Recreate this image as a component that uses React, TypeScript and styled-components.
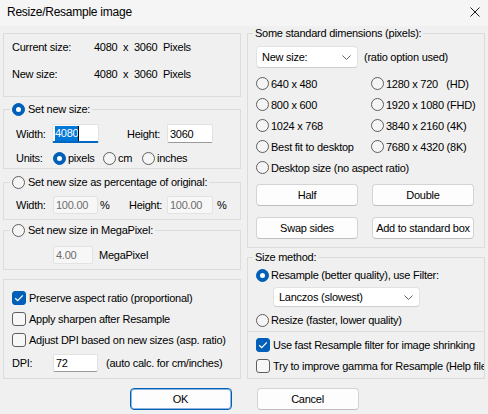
import styled, { createGlobalStyle } from 'styled-components';

const GlobalStyle = createGlobalStyle`
  * {
    box-sizing: border-box;
  }
  html,
  body {
    margin: 0;
    padding: 0;
    background: #f0f0f0;
  }
  body {
    font-family: 'Liberation Sans', Arial, sans-serif;
    font-size: 11px;
    letter-spacing: -0.25px;
    color: #000;
  }
`;

const Window = styled.div`
  width: 488px;
  height: 414px;
  display: flex;
  flex-direction: column;
  background: #f0f0f0;
  overflow: hidden;
`;

const TitleBar = styled.div`
  height: 26px;
  flex: none;
  display: flex;
  align-items: center;
  justify-content: space-between;
  padding: 0 8px 2px 7px;
  background: #f5f5f5;
  font-size: 12px;
`;

const Body = styled.div`
  display: flex;
  gap: 6px;
  padding: 0 3px;
`;

const Column = styled.div<{ $w: number; $pt?: number }>`
  width: ${(p) => p.$w}px;
  padding-top: ${(p) => p.$pt ?? 0}px;
  display: flex;
  flex-direction: column;
`;

const Panel = styled.div<{ $mt?: number; $pad: string }>`
  margin-top: ${(p) => p.$mt ?? 0}px;
  border: 1px solid #dcdcdc;
  padding: ${(p) => p.$pad};
  display: flex;
  flex-direction: column;
`;

const Group = styled.fieldset<{ $mt?: number; $pad: string }>`
  margin: ${(p) => p.$mt ?? 0}px 0 0;
  min-width: 0;
  border: 1px solid #dcdcdc;
  padding: ${(p) => p.$pad};
`;

const Legend = styled.legend<{ $h: number }>`
  height: ${(p) => p.$h}px;
  padding: 0 2px;
  line-height: ${(p) => p.$h}px;
`;

const LegendInner = styled.span`
  display: flex;
  align-items: center;
  gap: 3px;
  height: 100%;
`;

const Stack = styled.div<{ $pl?: number }>`
  display: flex;
  flex-direction: column;
  padding-left: ${(p) => p.$pl ?? 0}px;
`;

const Row = styled.div<{ $h: number; $mt?: number; $pl?: number }>`
  height: ${(p) => p.$h}px;
  margin-top: ${(p) => p.$mt ?? 0}px;
  padding-left: ${(p) => p.$pl ?? 0}px;
  display: flex;
  align-items: center;
  white-space: nowrap;
  overflow: hidden;
`;

const Caption = styled.span<{ $w?: number; $ml?: number }>`
  flex: none;
  width: ${(p) => (p.$w ? `${p.$w}px` : 'auto')};
  margin-left: ${(p) => p.$ml ?? 0}px;
  white-space: pre;
`;

const TextBox = styled.div<{ $w: number; $h: number; $ml?: number; $state?: 'focus' | 'disabled' }>`
  flex: none;
  width: ${(p) => p.$w}px;
  height: ${(p) => p.$h}px;
  margin-left: ${(p) => p.$ml ?? 0}px;
  padding: 0 2px;
  display: flex;
  align-items: center;
  background: ${(p) => (p.$state === 'disabled' ? '#f7f7f7' : '#fff')};
  color: ${(p) => (p.$state === 'disabled' ? '#6d6d6d' : '#000')};
  border: 1px solid #e2e2e2;
  border-bottom: ${(p) =>
    p.$state === 'focus'
      ? '2px solid #0067c0'
      : p.$state === 'disabled'
      ? '1px solid #e2e2e2'
      : '1px solid #9a9a9a'};
  border-radius: 2px;
`;

const Selection = styled.span`
  background: #0078d7;
  color: #fff;
  height: 15px;
  line-height: 15px;
`;

const Caret = styled.span`
  width: 1px;
  height: 15px;
  background: #000;
`;

const Dropdown = styled.div<{ $w: number; $h: number; $ml?: number }>`
  flex: none;
  width: ${(p) => p.$w}px;
  height: ${(p) => p.$h}px;
  margin-left: ${(p) => p.$ml ?? 0}px;
  padding: 0 6px 0 5px;
  display: flex;
  align-items: center;
  justify-content: space-between;
  background: #fff;
  border: 1px solid #e2e2e2;
  border-bottom-color: #cdcdcd;
  border-radius: 4px;
`;

const RadioMark = styled.span<{ $checked?: boolean }>`
  flex: none;
  width: 13px;
  height: 13px;
  border-radius: 50%;
  border: 1px solid ${(p) => (p.$checked ? '#005fb8' : '#5f5f5f')};
  background: ${(p) => (p.$checked ? '#005fb8' : '#f5f5f5')};
  display: flex;
  align-items: center;
  justify-content: center;
  &::after {
    content: '';
    display: ${(p) => (p.$checked ? 'block' : 'none')};
    width: 5px;
    height: 5px;
    border-radius: 50%;
    background: #fff;
  }
`;

const CheckBox = styled.span<{ $checked?: boolean }>`
  flex: none;
  width: 14px;
  height: 14px;
  border-radius: 3px;
  border: 1px solid ${(p) => (p.$checked ? '#005fb8' : '#5f5f5f')};
  background: ${(p) => (p.$checked ? '#005fb8' : '#f7f7f7')};
  display: flex;
  align-items: center;
  justify-content: center;
`;

const Choice = styled.label<{ $w?: number; $gap?: number }>`
  flex: none;
  width: ${(p) => (p.$w ? `${p.$w}px` : 'auto')};
  display: flex;
  align-items: center;
  gap: ${(p) => p.$gap ?? 2}px;
  white-space: pre;
`;

const RadioGrid = styled.div`
  margin-top: 5px;
  display: grid;
  grid-template-columns: 115px auto;
  grid-auto-rows: 21px;
  align-items: center;
`;

const ButtonGrid = styled.div`
  margin-top: 6px;
  display: grid;
  grid-template-columns: 102px 102px;
  column-gap: 14px;
  row-gap: 11px;
`;

const PushButton = styled.button<{ $primary?: boolean }>`
  height: 22px;
  width: 102px;
  padding: 0;
  font: inherit;
  letter-spacing: inherit;
  color: #000;
  background: #fdfdfd;
  border: 1px solid ${(p) => (p.$primary ? '#005fb8' : '#d4d4d4')};
  border-bottom-color: ${(p) => (p.$primary ? '#005fb8' : '#bfbfbf')};
  border-radius: 4px;
  box-shadow: ${(p) => (p.$primary ? 'inset 0 0 0 1px rgba(0, 95, 184, 0.45)' : 'none')};
`;

const Divider = styled.div`
  height: 1px;
  margin: 1px 0 0 -8px;
  background: #dcdcdc;
`;

const Footer = styled.div`
  margin-top: 9px;
  display: flex;
  justify-content: center;
  gap: 25px;
`;

const Chevron = () => (
  <svg width='9' height='5' viewBox='0 0 9 5'>
    <path d='M0.5 0.5 L4.5 4.5 L8.5 0.5' fill='none' stroke='#5f5f5f' strokeWidth='1' />
  </svg>
);

const Tick = () => (
  <svg width='10' height='8' viewBox='0 0 10 8'>
    <path d='M1.2 4.2 L3.7 6.6 L8.8 1.4' fill='none' stroke='#fff' strokeWidth='1.3' />
  </svg>
);

const Radio = ({ label, checked, w }: { label: string; checked?: boolean; w?: number }) => (
  <Choice $w={w}>
    <RadioMark $checked={checked} />
    {label}
  </Choice>
);

const Check = ({ label, checked }: { label: string; checked?: boolean }) => (
  <Choice $gap={3}>
    <CheckBox $checked={checked}>{checked && <Tick />}</CheckBox>
    {label}
  </Choice>
);

const standardSizes = [
  ['640 x 480', '1280 x 720   (HD)'],
  ['800 x 600', '1920 x 1080 (FHD)'],
  ['1024 x 768', '3840 x 2160 (4K)'],
  ['Best fit to desktop', '7680 x 4320 (8K)'],
];

export default function App() {
  return (
    <>
      <GlobalStyle />
      <Window>
        <TitleBar>
          <span>Resize/Resample image</span>
          <svg width='10' height='10' viewBox='0 0 10 10'>
            <path d='M0.5 0.5 L9.5 9.5 M9.5 0.5 L0.5 9.5' stroke='#1a1a1a' strokeWidth='1' />
          </svg>
        </TitleBar>
        <Body>
          <Column $w={239} $pt={7}>
            <Panel $pad='5px 0 14px 8px'>
              <Row $h={16}>
                <Caption $w={82}>Current size:</Caption>
                <Caption>4080  x  3060  Pixels</Caption>
              </Row>
              <Row $h={16} $mt={11}>
                <Caption $w={82}>New size:</Caption>
                <Caption>4080  x  3060  Pixels</Caption>
              </Row>
            </Panel>

            <Group $mt={4} $pad='6px 0 2px 6px'>
              <Legend $h={16}>
                <LegendInner>
                  <RadioMark $checked />
                  Set new size:
                </LegendInner>
              </Legend>
              <Stack $pl={6}>
                <Row $h={21}>
                  <Caption $w={36}>Width:</Caption>
                  <TextBox $w={47} $h={19} $state='focus'>
                    <Selection>4080</Selection>
                    <Caret />
                  </TextBox>
                  <Caption $w={40} $ml={28}>Height:</Caption>
                  <TextBox $w={46} $h={19}>3060</TextBox>
                </Row>
                <Row $h={16} $mt={6}>
                  <Caption $w={37}>Units:</Caption>
                  <Radio label='pixels' checked w={50} />
                  <Radio label='cm' w={39} />
                  <Radio label='inches' />
                </Row>
              </Stack>
            </Group>

            <Group $mt={5} $pad='6px 0 5px 6px'>
              <Legend $h={16}>
                <LegendInner>
                  <RadioMark />
                  Set new size as percentage of original:
                </LegendInner>
              </Legend>
              <Stack $pl={6}>
                <Row $h={18}>
                  <Caption $w={37}>Width:</Caption>
                  <TextBox $w={45} $h={18} $state='disabled'>100.00</TextBox>
                  <Caption $w={29} $ml={2}>%</Caption>
                  <Caption $w={38}>Height:</Caption>
                  <TextBox $w={46} $h={18} $state='disabled'>100.00</TextBox>
                  <Caption $ml={4}>%</Caption>
                </Row>
              </Stack>
            </Group>

            <Group $mt={2} $pad='8px 0 5px 6px'>
              <Legend $h={16}>
                <LegendInner>
                  <RadioMark />
                  Set new size in MegaPixel:
                </LegendInner>
              </Legend>
              <Stack $pl={6}>
                <Row $h={18}>
                  <TextBox $w={40} $h={18} $ml={37} $state='disabled'>4.00</TextBox>
                  <Caption $ml={6}>MegaPixel</Caption>
                </Row>
              </Stack>
            </Group>

            <Panel $mt={9} $pad='7px 0 6px 8px'>
              <Row $h={21}>
                <Check label='Preserve aspect ratio (proportional)' checked />
              </Row>
              <Row $h={21}>
                <Check label='Apply sharpen after Resample' />
              </Row>
              <Row $h={21}>
                <Check label='Adjust DPI based on new sizes (asp. ratio)' />
              </Row>
              <Row $h={18} $mt={4}>
                <Caption $w={41}>DPI:</Caption>
                <TextBox $w={45} $h={18}>72</TextBox>
                <Caption $ml={8}>(auto calc. for cm/inches)</Caption>
              </Row>
            </Panel>
          </Column>

          <Column $w={238}>
            <Group $pad='6px 5px 8px 5px'>
              <Legend $h={14}>Some standard dimensions (pixels):</Legend>
              <Stack $pl={3}>
                <Row $h={22}>
                  <Dropdown $w={102} $h={22}>
                    New size:
                    <Chevron />
                  </Dropdown>
                  <Caption $ml={6}>(ratio option used)</Caption>
                </Row>
                <RadioGrid>
                  {standardSizes.map(([left, right]) => [
                    <Radio key={left} label={left} />,
                    <Radio key={right} label={right} />,
                  ])}
                  <Radio label='Desktop size (no aspect ratio)' />
                </RadioGrid>
                <ButtonGrid>
                  <PushButton>Half</PushButton>
                  <PushButton>Double</PushButton>
                  <PushButton>Swap sides</PushButton>
                  <PushButton>Add to standard box</PushButton>
                </ButtonGrid>
              </Stack>
            </Group>

            <Group $mt={2} $pad='1px 0 2px 5px'>
              <Legend $h={14}>Size method:</Legend>
              <Stack $pl={3}>
                <Row $h={20}>
                  <Radio label='Resample (better quality), use Filter:' checked />
                </Row>
                <Row $h={20} $mt={2}>
                  <Dropdown $w={147} $h={20} $ml={17}>
                    Lanczos (slowest)
                    <Chevron />
                  </Dropdown>
                </Row>
                <Row $h={20} $mt={3}>
                  <Radio label='Resize (faster, lower quality)' />
                </Row>
                <Divider />
                <Row $h={20} $mt={3}>
                  <Check label='Use fast Resample filter for image shrinking' checked />
                </Row>
                <Row $h={20} $mt={1}>
                  <Check label='Try to improve gamma for Resample (Help file)' />
                </Row>
              </Stack>
            </Group>
          </Column>
        </Body>

        <Footer>
          <PushButton $primary>OK</PushButton>
          <PushButton>Cancel</PushButton>
        </Footer>
      </Window>
    </>
  );
}
